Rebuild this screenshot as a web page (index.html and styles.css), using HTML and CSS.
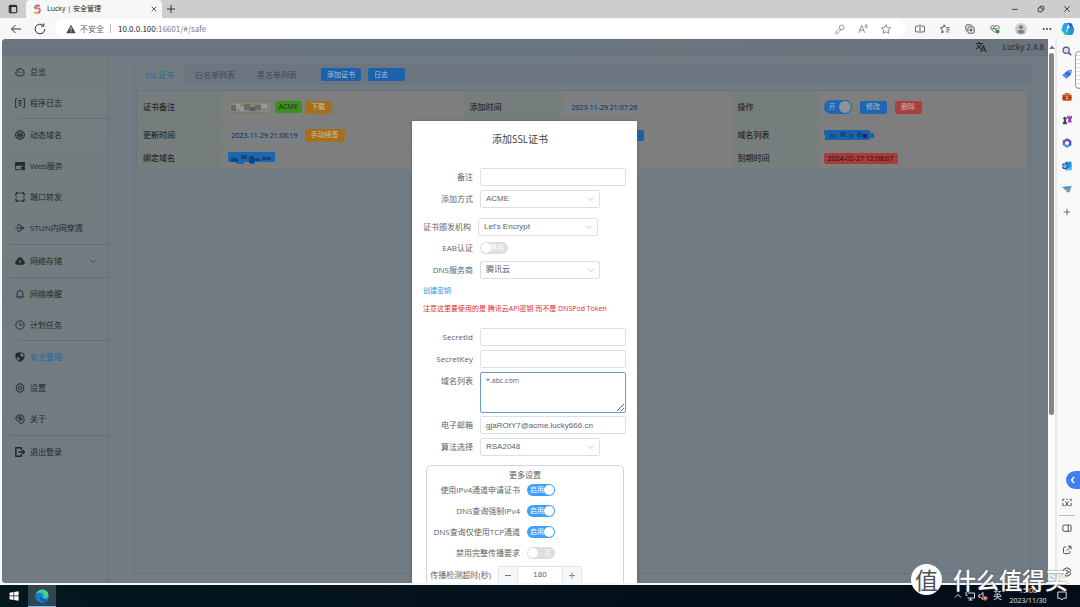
FILE: index.html
```html
<!DOCTYPE html>
<html lang="zh-CN">
<head>
<meta charset="utf-8">
<title>Lucky | 安全管理</title>
<link rel="stylesheet" href="styles.css">
</head>
<body>
<svg class="defs" aria-hidden="true">
  <symbol id="chev" viewBox="0 0 10 10"><path d="M1.5 3.2 5 6.8 8.5 3.2" fill="none" stroke="currentColor"/></symbol>
</svg>
<div class="desktop">
  <header class="tabstrip">
    <button class="ghost workspaces" aria-label="工作区"><svg class="i10" viewBox="0 0 12 12"><rect x="1.5" y="1.5" width="9" height="9" rx="1.5" fill="none" stroke="#222" stroke-width="1.3"/><path d="M1.5 2.8h9M3.3 2v8" stroke="#222" stroke-width="1.6"/></svg></button>
    <div class="browser-tab">
      <svg class="i10" viewBox="0 0 12 12" fill="none" stroke-width="2.2"><path d="M9.5 2H5L3 5" stroke="#f0506a"/><path d="M3 5.2h4" stroke="#35b6e6"/><path d="M6.5 5c4 0 4 5.5 0 5.500" stroke="#f25a78"/><path d="M7 10.500H2.500" stroke="#f59a3c"/></svg>
      <span class="tab-title">Lucky | 安全管理</span>
      <button class="ghost" aria-label="关闭标签页"><svg class="i8" viewBox="0 0 10 10"><path d="m2 2 6 6m0-6L2 8" stroke="#333"/></svg></button>
    </div>
    <button class="ghost newtab" aria-label="新建标签页"><svg class="i10" viewBox="0 0 10 10"><path d="M5 1v8M1 5h8" stroke="#333"/></svg></button>
    <div class="window-buttons">
      <button class="ghost" aria-label="最小化"><svg class="i8" viewBox="0 0 10 10"><path d="M1.500 5.500h7" stroke="#222"/></svg></button>
      <button class="ghost" aria-label="还原"><svg class="i8" viewBox="0 0 10 10" fill="none" stroke="#222"><rect x="1.500" y="3.500" width="5" height="5" rx="1"/><path d="M3.500 3V2.500q0-1 1-1h3q1 0 1 1v3q0 1-1 1"/></svg></button>
      <button class="ghost" aria-label="关闭"><svg class="i8" viewBox="0 0 10 10"><path d="m1.500 1.500 7 7m0-7-7 7" stroke="#222"/></svg></button>
    </div>
  </header>

  <div class="toolbar">
    <button class="ghost back" aria-label="返回"><svg class="i12" viewBox="0 0 12 12" fill="none" stroke="#333"><path d="M11 6H1.500M5.500 2l-4 4 4 4"/></svg></button>
    <button class="ghost reload" aria-label="刷新"><svg class="i12" viewBox="0 0 12 12" fill="none" stroke="#333"><path d="M10.800 6A4.800 4.800 0 1 1 9.300 2.500M9.800.5v2.700H7.200"/></svg></button>
    <div class="address">
      <svg class="i10" viewBox="0 0 12 12"><path d="M6 .8 11.700 11H.3z" fill="#4a4a4a"/><path d="M6 4v3.500M6 8.700v1" stroke="#fff"/></svg>
      <span class="insecure">不安全</span><i class="bar"></i>
      <span class="url"><b>10.0.0.100</b>:16601/#/safe</span>
      <div class="address-icons">
        <svg class="i10" viewBox="0 0 12 12" fill="none" stroke="#888"><circle cx="8" cy="4" r="2.800"/><path d="M5.500 5 1 9.500v1.800h2L4.500 10 7.500 6.800"/></svg>
        <svg class="i10" viewBox="0 0 12 12" fill="none" stroke="#777"><path d="m1 10.500 3.500-9 3.500 9M2.300 7.500h4.500M8.500 1q1.500 1.500 0 3.500M10 .3q2.200 2.300 0 5"/></svg>
        <svg class="i10" viewBox="0 0 12 12" fill="none" stroke="#777"><path d="m6 .8 1.600 3.500 3.800.4-2.800 2.600.8 3.900L6 9.300l-3.400 1.900.8-3.900L.6 4.700l3.800-.4z"/></svg>
      </div>
    </div>
    <div class="tools">
      <svg class="i10" viewBox="0 0 12 12" fill="none" stroke="#444"><path d="M6 .5v11M4.500 2.500h-3q-1 0-1 1v5q0 1 1 1h3M7.500 2.500h3q1 0 1 1v5q0 1-1 1h-3"/></svg>
      <svg class="i10" viewBox="0 0 12 12" fill="none" stroke="#333"><path d="M6.500 4 5 1 3.500 4.200.5 4.700l2.300 2.200-.6 3.600L5 9M7.500 4.500h4M7.500 7h4M7.500 9.500h3"/></svg>
      <svg class="i10" viewBox="0 0 12 12" fill="none" stroke="#333"><rect x="3.500" y="3.500" width="7.500" height="7.500" rx="1.500"/><path d="M2.500 8.500Q1 8 1 6.500v-4Q1 1 2.500 1h4Q8 1 8.500 2.500M7.200 5v4.500M5 7.200h4.500"/></svg>
      <svg class="i10" viewBox="0 0 12 12" fill="none" stroke="#444"><path d="M6 10.500 1.500 6C-.5 3 3 .5 6 3c3-2.500 6 0 4.600 3M2 6h2l1-2 1.500 3 1-1.500H9"/><circle cx="9" cy="9" r="2.500" fill="#239b35" stroke="none"/></svg>
      <svg class="i12" viewBox="0 0 12 12"><circle cx="6" cy="6" r="6" fill="#cfcdcc"/><circle cx="6" cy="4.300" r="2.100" fill="#858180"/><path d="M2.300 9.500q0-2.500 2-2.500h3.400q2 0 2 2.500Q6 12 2.300 9.500" fill="#858180"/></svg>
      <svg class="i10" viewBox="0 0 12 12" fill="#333"><circle cx="2" cy="6" r="1.100"/><circle cx="6" cy="6" r="1.100"/><circle cx="10" cy="6" r="1.100"/></svg>
      <svg class="i14" viewBox="0 0 14 14"><path d="M4 1h5q2 0 2.500 2l1 3q1 4-2 4H8L9 5 7 2z" fill="#1a63d8"/><path d="M4 1q3 0 3 2L5 10H3Q0 10 .6 7L2 3q.5-2 2-2" fill="#24a8e8"/><path d="M10 13H5q-2 0-2.500-2L2 10h3q1 0 2-4h4q2.500 0 2 3l-1 2.500Q11.500 13 10 13" fill="#2cc2a8"/><path d="M8.500 5H11q3 1 2 4l-.8 2Q11.500 13 9 13l-2-.5z" fill="#2a8af0"/></svg>
    </div>
  </div>

  <div class="browser-body">
    <main class="page">
      <div class="app-header">
        <svg class="i12" viewBox="0 0 12 12" fill="none" stroke="#22282e" stroke-width="1.100"><path d="M.5 2.500H8M4.200.8v1.700M2 4.200 6 8M6.500 2.700Q5.500 6 .8 8M6 11l2.500-6L11 11M7 9h3.200"/></svg>
        <span>Lucky 2.4.8</span>
      </div>
      <div class="app-body">
        <nav class="menu">
          <a href="#"><svg viewBox="0 0 12 12"><path d="M2.500 10.500A5 5 0 1 1 9.500 10.500zM6 7.500 4 4.500M2.500 6.500h1M6 3v1M8.500 6.500h1" /></svg>总览</a>
          <a href="#"><svg viewBox="0 0 12 12"><path d="M2.500.7H.7v10.600h1.800M9.500.7h1.800v10.600H9.500M4 3h4M4 5h4M4 7h4M4 9h3"/></svg>程序日志</a>
          <hr class="inset">
          <a href="#"><svg viewBox="0 0 12 12"><circle cx="6" cy="6" r="5.300"/><path d="M2 3q4 2 8 0M2 9q4-2 8 0M.8 4.500v3M11.200 4.500v3M3 4.500l.7 3L4.500 5l.8 2.500L6 4.500M7 4.500l.7 3L8.500 5l.8 2.500M6 .7v2M6 9v2"/></svg>动态域名</a>
          <a href="#"><svg viewBox="0 0 12 12"><path d="M.7 5v5.300h6M.7 5V2h10.600v4M8 8.500h3.500M9.700 7v3.500"/><path d="M.7 2h10.600v3H.7zM8 7h3.500v3.500H8z" fill="currentColor"/></svg>Web服务</a>
          <a href="#"><svg viewBox="0 0 12 12" class="bold"><path d="M1 4V2.500L2.500 1H4M8 1h1.500L11 2.500V4M11 8v1.500L9.500 11H8M4 11H2.500L1 9.500V8M1 6h1M10 6h1M6 1v1M6 10v1"/></svg>端口转发</a>
          <a href="#"><svg viewBox="0 0 12 12"><path d="M.5 6H11M9 4l2 2-2 2M3.500 4V2H5q3 0 3 4t-3 4H3.500V8"/></svg>STUN内网穿透</a>
          <hr>
          <a href="#"><svg viewBox="0 0 12 12"><path d="M3 10Q.5 10 .7 7.500.9 5.700 2.700 5.500 3 2 6 2t3.300 3.500Q11.300 6 11.300 8T9 10z" fill="currentColor"/><path d="M6 9V5.500M4.500 7 6 5.400 7.500 7" class="knock"/></svg><span>网络存储</span><svg class="more"><use href="#chev"/></svg></a>
          <hr>
          <a href="#"><svg viewBox="0 0 12 12"><path d="M1 9.500h10M2.500 9V5.500Q2.500 2 6 2t3.500 3.500V9M6 .5V2M5 11h2"/></svg>网络唤醒</a>
          <a href="#"><svg viewBox="0 0 12 12"><circle cx="6" cy="6" r="5"/><path d="M6 3v3.200h3"/></svg>计划任务</a>
          <hr class="inset">
          <a href="#" class="current"><svg viewBox="0 0 12 12"><path d="M6 .8 10.800 2.200V6Q10.500 9.500 6 11.300 1.500 9.500 1.200 6V2.200z"/><path d="M6 .8V6H1.200V2.200zM6 6h4.800Q10.500 9.500 6 11.300z" fill="currentColor"/></svg><span>安全管理</span></a>
          <a href="#"><svg viewBox="0 0 12 12"><circle cx="6" cy="6" r="1.900"/><path d="m4.600 1 2.800 0 .5 1.500 1.600-.2 1.300 2.400L9.700 6l1.100 1.300-1.300 2.400-1.600-.2-.5 1.500H4.600l-.5-1.500-1.600.2-1.300-2.400L2.300 6 1.200 4.700l1.300-2.400 1.600.2z"/></svg>设置</a>
          <a href="#"><svg viewBox="0 0 12 12"><path d="M3 8.500Q.8 7 1 5q.3-4 5-4.200 4.500.2 4.800 4.200v3q-.3 3-3 3.300Q5 11.300 4.300 8.500M3.500 6q-1-3 2.300-3 2.200 0 2.400 2v2.500M5.500 8.500V5q.7-.8 1.300 0v2.500M4 9 3 7.500"/></svg>关于</a>
          <hr>
          <a href="#"><svg viewBox="0 0 12 12" class="bold"><path d="M7.500 3.500V1H1v10h6.500V8.500M4 6h7M8.800 3.500 11.200 6 8.800 8.500"/></svg>退出登录</a>
        </nav>

        <section class="content">
          <div class="panel">
            <div class="tabs">
              <a class="tab active" href="#">SSL证书</a>
              <a class="tab" href="#">白名单列表</a>
              <a class="tab" href="#">黑名单列表</a>
              <button class="btn blue wide">添加证书</button>
              <button class="btn blue log">日志</button>
            </div>
            <table class="info">
              <colgroup><col class="c1"><col class="c2"><col class="c3"><col class="c4"><col class="c5"><col class="c6"></colgroup>
              <tr class="tall">
                <th scope="row">证书备注</th>
                <td><div class="cell"><svg class="mosaic" viewBox="0 0 44 12"><rect x=".5" y=".5" width="43" height="11" rx="2" fill="#858580" stroke="#718058"/><path d="M3 4h5v6H3zM16 3h6v6h-6zM27 4h6v5h-6z" fill="#696966"/><path d="M8 3h4v5H8zM12 6h4v4h-4zM33 3h6v4h-6z" fill="#9b9995"/><path d="M22 6h5v4h-5z" fill="#5c5c64"/></svg><span class="tag green">ACME</span><button class="btn orange">下载</button></div></td>
                <th scope="row">添加时间</th>
                <td><span class="tag plain">2023-11-29 21:07:26</span></td>
                <th scope="row">操作</th>
                <td><div class="cell ops"><label class="switch dim"><input type="checkbox" checked aria-label="启用证书"><span>开</span></label><button class="btn edit">修改</button><button class="btn red">删除</button></div></td>
              </tr>
              <tr>
                <th scope="row">更新时间</th>
                <td><div class="cell"><span class="tag plain">2023-11-29 21:08:19</span><button class="btn orange wide">手动续签</button></div></td>
                <th></th>
                <td class="behind"><span class="tag sliver"></span></td>
                <th scope="row">域名列表</th>
                <td><svg class="mosaic big" viewBox="0 0 50 12"><path d="M0 1h46v3h4v5h-4v2H1V6H0z" fill="#1a62ab"/><path d="M6 5h5v4H6zM16 3h6v5h-6zM25 5h4v4h-4zM33 3h5v5h-5z" fill="#1a4b80"/><path d="M39 5h4v4h-4z" fill="#20235d"/></svg></td>
              </tr>
              <tr>
                <th scope="row">绑定域名</th>
                <td><svg class="mosaic big" viewBox="0 0 50 12"><path d="M0 0h47v10H27v2h-5v-2h-6v2H8v-2H0z" fill="#1968b3"/><path d="M3 6h7v4H3zM13 3h6v4h-6zM21 4h5v7h-5zM34 5h9v3h-9z" fill="#194474"/><path d="M26 6h6v3h-6z" fill="#11457f"/></svg></td>
                <th></th>
                <td></td>
                <th scope="row">到期时间</th>
                <td><span class="tag expired">2024-02-27 12:08:07</span></td>
              </tr>
            </table>
          </div>
        </section>
      </div>

      <div class="dialog" role="dialog" aria-labelledby="dlg-title">
        <h1 id="dlg-title">添加SSL证书</h1>
        <form class="form">
          <div class="row"><label for="remark">备注</label><input class="text" id="remark"></div>
          <div class="row"><label for="mode">添加方式</label><div class="pick"><select id="mode"><option>ACME</option></select><svg><use href="#chev"/></svg></div></div>
          <div class="row ca"><label for="ca">证书颁发机构</label><div class="pick"><select id="ca"><option>Let's Encrypt</option></select><svg><use href="#chev"/></svg></div></div>
          <div class="row"><label for="eab">EAB认证</label><div class="switch"><input type="checkbox" id="eab"><span>禁用</span></div></div>
          <div class="row"><label for="dns">DNS服务商</label><div class="pick"><select id="dns"><option>腾讯云</option></select><svg><use href="#chev"/></svg></div></div>
          <div class="hint"><a href="#">创建密钥</a><p>注意这里要使用的是 腾讯云API密钥 而不是 DNSPod Token</p></div>
          <div class="row"><label for="sid">SecretId</label><input class="text" id="sid"></div>
          <div class="row"><label for="skey">SecretKey</label><input class="text" id="skey"></div>
          <div class="row area"><label for="domains">域名列表</label><textarea class="text" id="domains">*.abc.com</textarea></div>
          <div class="row"><label for="mail">电子邮箱</label><input class="text" id="mail" value="gjaROtY7@acme.lucky666.cn"></div>
          <div class="row"><label for="algo">算法选择</label><div class="pick"><select id="algo"><option>RSA2048</option></select><svg><use href="#chev"/></svg></div></div>
          <div class="extra">
            <h2>更多设置</h2>
            <div class="row"><label for="s1">使用IPv4通道申请证书</label><div class="switch"><input type="checkbox" id="s1" checked><span>启用</span></div></div>
            <div class="row"><label for="s2">DNS查询强制IPv4</label><div class="switch"><input type="checkbox" id="s2" checked><span>启用</span></div></div>
            <div class="row"><label for="s3">DNS查询仅使用TCP通道</label><div class="switch"><input type="checkbox" id="s3" checked><span>启用</span></div></div>
            <div class="row"><label for="s4">禁用完整传播要求</label><div class="switch"><input type="checkbox" id="s4"><span>否</span></div></div>
            <div class="row timeout"><label for="timeout">传播检测超时(秒)</label><div class="stepper"><button type="button" aria-label="减少"><svg class="i8" viewBox="0 0 8 8"><path d="M1 4.500h6" stroke="#777"/></svg></button><input id="timeout" value="180"><button type="button" aria-label="增加"><svg class="i8" viewBox="0 0 8 8"><path d="M1 4.500h6M4 1.500v6" stroke="#888"/></svg></button></div></div>
          </div>
        </form>
      </div>
    </main>

    <div class="scroll"><svg class="i8" viewBox="0 0 8 8"><path d="M1 6 4 2.500 7 6z" fill="#777"/></svg><div class="thumb"></div></div>

    <aside class="edge-bar">
      <svg viewBox="0 0 12 12" fill="none"><circle cx="5" cy="5" r="3.700" stroke="#4a5a6a" stroke-width="1.400" fill="#cfe2f2"/><path d="m7.800 7.800 3.200 3.200" stroke="#8a35c8" stroke-width="2"/></svg>
      <svg viewBox="0 0 12 12"><path d="M6 2.500 11 1q.8 0 .7.8L10.500 7l-5 4.500L.5 7.500z" fill="#3d6ae0"/><path d="M.5 7.500 5.500 11.500 8 9.300 3 5.200z" fill="#4b94f2"/><circle cx="9.300" cy="3.300" r=".9" fill="#fff"/></svg>
      <svg viewBox="0 0 12 12"><path d="M4 3.500V1.800h4v1.700" fill="none" stroke="#8c3a16"/><rect x=".5" y="3" width="11" height="7.500" rx="1" fill="#c9501f"/><path d="M.5 6h11v1.500H.5z" fill="#8c2e12"/><path d="M5 5.500h2v3H5z" fill="#f2c085"/></svg>
      <svg viewBox="0 0 12 12"><circle cx="3.500" cy="4" r="2" fill="#444"/><path d="M2.500 5h2l.7 4H6v2H1V9h.8z" fill="#444"/><path d="M6 1h1v1h1V1h1.500v1h1V1H12v3l-1 .5.500 4.500H7L7.500 4.500 6 4z" fill="#a13bd8"/></svg>
      <svg viewBox="0 0 12 12" fill="none" stroke-width="2.800"><path d="M7 1.500 2.300 3.800v4.500" stroke="#7b4bd0"/><path d="M2 7.500 6 10.300l4-2.500" stroke="#4a9be0"/><path d="M9.800 9V4L6 1.800" stroke="#4f50c8"/></svg>
      <svg viewBox="0 0 12 12"><rect x="3.500" y="1" width="8" height="10" rx="1" fill="#2390dc"/><path d="M3.500 6 7.500 9l4-3v5h-8z" fill="#57c2f2"/><rect x=".5" y="3" width="6" height="6.500" rx="1" fill="#0f5eae"/><circle cx="3.500" cy="6.200" r="1.500" fill="none" stroke="#fff"/></svg>
      <svg viewBox="0 0 12 12"><path d="M.3 3.500 11.700 2 8.500 10.500 5.300 8z" fill="#2b96dc"/><path d="M11.700 2 4.500 7.200 5 10.500 6.500 8.500z" fill="#e8a02c"/></svg>
      <svg viewBox="0 0 12 12"><path d="M6 2v8M2 6h8" stroke="#555"/></svg>
      <div class="edge-bottom">
        <svg viewBox="0 0 12 12" fill="none" stroke="#333"><path d="M1 4V1.500h2M5 1.500h2M9 1.500h2V4M1 6v3h2M11 6v3H9M4 4l4 6M8 4l-4 6"/></svg>
        <hr>
        <svg viewBox="0 0 12 12" fill="none" stroke="#333"><rect x="1" y="2.500" width="10" height="7.500" rx="1.500"/><path d="M7.500 2.500V10" /></svg>
        <svg viewBox="0 0 12 12" fill="none" stroke="#333"><path d="M5 2.500H3Q1.800 2.500 1.800 4v5q0 1.300 1.400 1.300H8q1.500 0 1.500-1.500V7M7 1.500h3.800v3.800M10.500 1.800 5.500 7"/></svg>
        <svg viewBox="0 0 12 12" fill="none" stroke="#333"><circle cx="6" cy="6" r="1.700"/><path d="m5 1 2 0 .6 1.500 1.800-.4 1 1.900L9.300 6l1.100 2-1 1.900-1.800-.4L7 11H5l-.6-1.500-1.800.4-1-1.900L2.700 6 1.600 4l1-1.900 1.800.4z"/></svg>
      </div>
      <div class="peek"></div>
      <button class="expand" aria-label="展开"><svg class="i8" viewBox="0 0 8 8"><path d="M5 1 2.500 4 5 7" fill="none" stroke="#fff" stroke-width="1.300"/></svg></button>
    </aside>
  </div>

  <footer class="taskbar">
    <button class="ghost start" aria-label="开始"><svg class="i10" viewBox="0 0 10 10" fill="#fff"><path d="M.5 1.700 4.500 1v3.600h-4zM5.200.9 9.600.3v4.300H5.200zM.5 5.300h4V9l-4-.7zM5.200 5.300h4.400v4.400l-4.400-.6z"/></svg></button>
    <button class="ghost edge" aria-label="Edge"><svg class="i14" viewBox="0 0 14 14"><circle cx="7" cy="7" r="6.600" fill="#168bd5"/><path d="M1 5Q3 .3 7.500.4q5.800.5 6 5.500 0 3-3.500 3Q8 9 8.500 7 9 4 5.500 3.800 2.500 3.700 1 5" fill="#45cf84"/><path d="M.5 6Q3 3 6.200 4.500 4 6 4.600 9q1.300 4 5.500 3.500Q6 15 2.500 11.800.5 10 .5 6" fill="#1577cf"/><path d="M5.800 7Q6 11 11.800 10.800 9 13 6.500 11.500 4 9.500 5.800 7" fill="#0c4d91"/></svg></button>
    <div class="tray">
      <svg class="i8" viewBox="0 0 8 8"><path d="M1 5.500 4 2.500l3 3" fill="none" stroke="#ddd"/></svg>
      <svg class="i10" viewBox="0 0 10 10" fill="none" stroke="#ddd"><path d="M2.500 2h7v5h-7M1 1v3.500h1.500M5.500 7v2M3.500 9h4"/></svg>
      <svg class="i10" viewBox="0 0 10 10" fill="none" stroke="#ddd"><path d="M.8 3.800h1.700L5 1.500v7L2.500 6.300H.8z"/><circle cx="7.300" cy="7.300" r="2.400" fill="#d8373c" stroke="none"/><path d="m6.300 6.300 2 2m0-2-2 2" stroke="#fff"/></svg>
      <span class="ime">英</span>
      <div class="clock"><span>15:08</span><span>2023/11/30</span></div>
      <svg class="i10" viewBox="0 0 10 10" fill="none" stroke="#ddd"><path d="M.8 1h8.400v6.300H6.500L5 9 3.500 7.300H.8z"/></svg>
    </div>
  </footer>
  <div class="watermark"><span class="seal">值</span><span class="mark">什么值得买</span></div>
</div>
</body>
</html>
```

FILE: styles.css
```css
* { box-sizing: border-box; }
body { margin: 0; font: 8px/12px "Open Sans", "Noto Sans CJK SC", sans-serif; color: #555; }
button, input, select, textarea { font: inherit; color: inherit; margin: 0; padding: 0; }
a { color: inherit; text-decoration: none; }
svg { display: block; flex: none; }
hr { border: 0; margin: 0; height: 1px; }
.defs { position: absolute; width: 0; height: 0; }
.i8 { width: 8px; height: 8px; }
.i10 { width: 10px; height: 10px; }
.i12 { width: 12px; height: 12px; }
.i14 { width: 14px; height: 14px; }
.ghost { border: 0; background: none; display: flex; align-items: center; justify-content: center; }

.desktop { position: relative; display: flex; flex-direction: column; height: 100vh; overflow: hidden; background: #f7f7f7; }

/* Browser frame */
.tabstrip { display: flex; align-items: center; height: 18px; flex: none; background: #cdcdcd; }
.workspaces { width: 26px; }
.browser-tab { display: flex; align-items: center; align-self: stretch; width: 136px; padding: 0 4px 0 6px; gap: 5px; background: #f7f7f7; border-radius: 4px 4px 0 0; color: #222; }
.tab-title { flex: 1; font: 7px/12px "Open Sans", "Noto Sans CJK SC", sans-serif; }
.newtab { width: 18px; }
.window-buttons { display: flex; gap: 18px; margin-left: auto; padding-right: 9px; }
.toolbar { display: flex; align-items: center; height: 21px; flex: none; padding: 0 5px 0 10px; }
.reload { margin-left: 12px; }
.address { display: flex; align-items: center; flex: 1; height: 19px; margin-left: 9px; padding: 0 15px 0 11px; border-radius: 10px; background: #fff; }
.address > svg { margin-right: 4px; }
.insecure { color: #666; }
.bar { width: 1px; height: 9px; margin: 0 7px 0 6px; background: #bbb; }
.url { font-family: "Noto Sans CJK SC", sans-serif; color: #777; }
.url b { font-weight: 400; color: #222; }
.address-icons { display: flex; gap: 13px; margin-left: auto; }
.tools { display: flex; align-items: center; gap: 15px; padding-left: 9px; }
.tools svg:last-child { margin-left: -6px; }
.browser-body { display: flex; flex: 1; min-height: 0; padding-bottom: 2px; }

/* Dimmed page */
.page { position: relative; display: flex; flex-direction: column; flex: 1; margin-left: 2px; min-width: 0; overflow: hidden; border-radius: 4px 0 0 4px; background: #717b83; color: #23282c; }
.app-header { display: flex; align-items: center; justify-content: flex-end; gap: 16px; height: 17px; flex: none; padding-right: 4px; border-bottom: 1px solid #68717a; background: linear-gradient(90deg, #6c7480, #69767f 40%, #6b737d); font-family: "Noto Sans CJK SC", sans-serif; }
.app-body { display: flex; flex: 1; min-height: 0; }
.menu { width: 107px; flex: none; border-right: 1px solid #697278; background: linear-gradient(#747d7e, #717b82 80%); }
.menu a { display: flex; align-items: center; height: 31px; padding-left: 13px; gap: 5px; }
.menu a > svg { width: 10px; height: 10px; fill: none; stroke: currentColor; stroke-width: 1.1; }
.menu svg.bold { stroke-width: 1.8; }
.menu .knock { stroke: #737c80; }
.menu a > .more { width: 8px; height: 8px; margin: 0 11px 0 auto; color: #3b4247; }
.menu hr { height: 2px; margin-left: 7px; border-bottom: 1px solid #656d73; }
.menu .inset { height: 1px; margin-left: 16px; }
.current span { color: #1c67ad; }
.content { flex: 1; min-width: 0; padding: 7px 17px 9px 24px; border-left: 1px solid #747a7d; }
.panel { height: 100%; border: 1px solid #68747d; border-top-color: #6e777f; }
.tabs { display: flex; align-items: center; height: 21px; background: #6b7681; }
.tab { display: flex; align-items: center; align-self: stretch; padding: 0 11px; color: #43494f; }
.tab.active { background: #747b80; color: #1b66ad; padding: 0 10px; }
.btn { display: inline-flex; align-items: center; justify-content: center; height: 13px; min-width: 27px; padding: 0 6px; border: 0; border-radius: 2px; color: #b4c0ce; font-size: 7px; line-height: 10px; }
.btn.wide { min-width: 40px; }
.blue { background: #1b61ac; }
.tabs .blue { margin-left: 13px; }
.tabs .log { margin-left: 7px; padding-right: 17px; }
.edit { background: #1d67b3; }
.orange { background: #a66e21; color: #d0c2aa; }
.red { background: #ab3f40; color: #d0b4b4; }
.info { width: calc(100% - 3px); margin: 5px 2px 0 1px; table-layout: fixed; border-collapse: collapse; border: 1px solid #69747a; background: #7e7e7e; }
.c1 { width: 85px; } .c2 { width: 242px; } .c3 { width: 98px; } .c4 { width: 170px; } .c5 { width: 86px; }
.info tr { height: 23px; border-bottom: 1px solid #767b7d; }
.info .tall { height: 33px; }
.info th { padding: 0 0 0 6px; text-align: left; font-weight: 500; color: #272b2e; background: #767d7d; }
.info td { padding: 0 0 0 6px; }
.info td, .info th { vertical-align: middle; }
.cell { display: flex; align-items: center; gap: 3px; }
.ops { gap: 8px; }
.tag { display: inline-block; height: 11px; padding: 0 4px; border-radius: 2px; font-size: 7px; line-height: 11px; color: #1c2126; }
.plain { background: #76828b; }
.green { height: 12px; background: #3c921a; line-height: 12px; }
.expired { background: #a93b3b; color: #1c1010; }
.behind { text-align: right; }
.sliver { width: 76px; margin-right: 88px; background: #175fa9; vertical-align: middle; }
.mosaic { width: 44px; height: 12px; }
.mosaic.big { width: 50px; }

/* Controls */
.switch { position: relative; display: flex; width: 28px; height: 12px; }
.switch input { appearance: none; width: 28px; height: 12px; border-radius: 6px; background: #dcdce1; }
.switch input::after { content: ""; display: block; width: 10px; height: 10px; margin: 1px; border-radius: 50%; background: #fff; }
.switch input:checked { background: #409eff; }
.switch input:checked::after { margin-left: 17px; }
.switch span { position: absolute; top: 0; right: 4px; font-size: 7px; line-height: 12px; color: #fff; pointer-events: none; }
.switch input:checked + span { right: auto; left: 3px; }
.switch.dim { height: 14px; }
.switch.dim input { height: 14px; border-radius: 7px; background: #1e67b3; }
.switch.dim input::after { width: 12px; height: 12px; background: #8f9296; }
.switch.dim input:checked::after { margin-left: 15px; }
.switch.dim input:checked + span { top: 1px; left: 5px; color: #a4b5c6; }
.text, .pick select { border: 1px solid #dcdfe6; border-radius: 2px; background: #fff; outline: 0; padding: 0 5px; font: 8px/16px "Liberation Sans", "Noto Sans CJK SC", sans-serif; color: #606266; }
.text { flex: 1; min-width: 0; height: 18px; }
.pick { position: relative; width: 120px; }
.pick select { display: block; appearance: none; width: 100%; height: 18px; }
.pick svg { position: absolute; right: 5px; top: 5px; width: 8px; height: 8px; color: #b4b8bf; pointer-events: none; }

/* Dialog */
.dialog { position: absolute; top: 82px; bottom: 0; left: 410px; width: 225px; overflow: hidden; background: #fff; color: #606266; box-shadow: 0 0 3px #60686d; }
.dialog h1 { margin: 11px 9px 22px 0; text-align: center; font-size: 10px; line-height: 14px; font-weight: 400; color: #444; }
.form { display: flex; flex-direction: column; gap: 3px; padding: 0 11px; }
.row { display: flex; align-items: center; gap: 7px; height: 18px; margin-bottom: 1px; flex: none; }
.row > label { width: 50px; flex: none; text-align: right; white-space: nowrap; }
.ca { margin: 6px 0 0; }
.ca > label { width: 48px; }
.hint { display: flex; flex-direction: column; gap: 6px; margin: 2px 0 10px; font-size: 7px; }
.hint a { color: #3595e0; }
.hint p { margin: 0; color: #e02a2a; white-space: nowrap; }
.area { height: 41px; margin-bottom: 0; align-items: flex-start; }
.area > label { padding-top: 3px; }
.area .text { height: 41px; border-color: #6a9cc5; resize: vertical; font: 7px/16px "Open Sans", sans-serif; }
.extra { margin: 5px 2px 0 3px; padding-top: 3px; height: 160px; border: 1px solid #d0d3e0; border-radius: 5px; }
.extra h2 { margin: 0; text-align: center; font-size: 8px; line-height: 12px; font-weight: 400; }
.extra .row { margin-bottom: 3px; }
.extra .row > label { width: 93px; }
.extra .timeout { margin-top: 4px; }
.extra .timeout > label { width: 64px; }
.stepper { display: flex; width: 84px; height: 18px; border: 1px solid #e0e3e9; border-radius: 2px; }
.stepper button { display: flex; align-items: center; justify-content: center; width: 18px; border: 0; background: #f5f7fa; }
.stepper input { flex: 1; min-width: 0; border: solid #e0e3e9; border-width: 0 1px; text-align: center; font-family: "Liberation Sans", sans-serif; outline: 0; }

/* Browser edges */
.scroll { display: flex; flex-direction: column; align-items: center; width: 7px; padding-top: 4px; gap: 2px; background: #fbfbfb; flex: none; }
.thumb { width: 5px; height: 67%; border-radius: 3px; background: #858585; }
.edge-bar { position: relative; display: flex; flex-direction: column; align-items: center; gap: 13px; width: 25px; flex: none; padding: 7px 3px 6px 0; border-left: 2px solid #eaeaea; background: #f8f8f8; }
.edge-bar > svg, .edge-bottom svg { width: 10px; height: 10px; }
.edge-bottom { display: flex; flex-direction: column; align-items: center; gap: 12px; margin-top: auto; }
.edge-bottom hr { width: 16px; background: #bbb; margin: -5px 0; }
.peek { position: absolute; top: 12px; right: -4px; width: 9px; height: 38px; border: 1px solid #999; border-radius: 4px; background: repeating-linear-gradient(#fff 0 3px, #ddd 3px 4px); }
.expand { position: absolute; top: 432px; right: 0; display: flex; align-items: center; justify-content: center; width: 14px; height: 18px; border: 0; border-radius: 9px 0 0 9px; background: #3b82ee; }

/* Taskbar */
.taskbar { display: flex; height: 22px; flex: none; background: linear-gradient(90deg, #04161e, #030d19); color: #e6e6e6; }
.start { width: 28px; }
.edge { width: 28px; background: #33454c; border-bottom: 1px solid #76b9ed; }
.tray { display: flex; align-items: center; gap: 3px; margin-left: auto; padding-right: 13px; }
.ime { margin-left: 2px; font-size: 9px; }
.clock { display: flex; flex-direction: column; align-items: center; width: 40px; margin: 0 6px 0 3px; font-size: 7px; line-height: 10px; }
.watermark { position: absolute; right: 12px; bottom: 12px; display: flex; align-items: center; gap: 11px; color: #fff; font-family: "Noto Sans CJK SC", sans-serif; pointer-events: none; }
.seal { width: 31px; height: 31px; border-radius: 50%; background: #fff; color: #49515a; text-align: center; font-size: 23px; line-height: 30px; font-weight: 400; }
.mark { font-size: 23px; line-height: 32px; font-weight: 500; text-shadow: 0 0 2px #555; }
```
